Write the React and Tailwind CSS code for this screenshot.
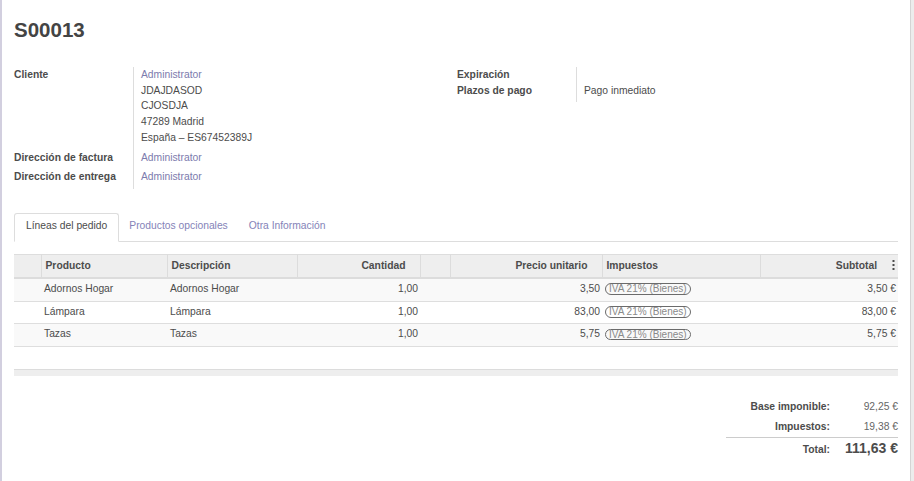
const LINES = [
  { product: 'Adornos Hogar', desc: 'Adornos Hogar', qty: '1,00', price: '3,50', subtotal: '3,50 €' },
  { product: 'Lámpara', desc: 'Lámpara', qty: '1,00', price: '83,00', subtotal: '83,00 €' },
  { product: 'Tazas', desc: 'Tazas', qty: '1,00', price: '5,75', subtotal: '5,75 €' },
]

function Field({ label, children, last }) {
  return (
    <div className="flex">
      <div className={`w-[119px] shrink-0 font-bold ${last ? '' : 'pb-[4px]'}`}>{label}</div>
      <div className={`flex-1 border-l border-[#ddd] pl-[7px] ${last ? '' : 'pb-[4px]'}`}>{children}</div>
    </div>
  )
}

function TaxBadge() {
  return (
    <span className="inline-block rounded-full border-[1.5px] border-[#6b6b6b] px-[3px] text-[10px] leading-[9.5px] text-[#8a8a8a] align-middle">
      IVA 21% (Bienes)
    </span>
  )
}

export default function App() {
  return (
    <div className="flex min-h-[481px] bg-[#ececec] font-['Liberation_Sans',Arial,sans-serif] text-[10.3px] leading-[15.7px] text-[#4c4c4c]">
      <div className="w-[911px] shrink-0 bg-white border-l-2 border-[#d2cfdf] border-r border-r-[#d4d4d4] px-[12px] pt-[18px]">
        {/* Titulo */}
        <h1 className="text-[20.5px] leading-[24px] font-bold text-[#444]">S00013</h1>

        {/* Campos */}
        <div className="mt-[25px] grid grid-cols-2">
          <div>
            <Field label="Cliente">
              <div className="text-[#7c7bad]">Administrator</div>
              <div>JDAJDASOD</div>
              <div>CJOSDJA</div>
              <div>47289 Madrid</div>
              <div>España – ES67452389J</div>
            </Field>
            <Field label="Dirección de factura">
              <div className="text-[#7c7bad]">Administrator</div>
            </Field>
            <Field label="Dirección de entrega">
              <div className="text-[#7c7bad]">Administrator</div>
            </Field>
          </div>
          <div className="pl-px">
            <Field label="Expiración" last>
              <div>&nbsp;</div>
            </Field>
            <Field label="Plazos de pago">
              <div>Pago inmediato</div>
            </Field>
          </div>
        </div>

        {/* Pestañas */}
        <div className="mt-[24px] flex border-b border-[#ddd]">
          <div className="-mb-px rounded-t-[3px] border border-[#ddd] border-b-white bg-white px-[11px] pt-[4px] pb-[7px]">
            Líneas del pedido
          </div>
          <div className="pl-[10px] pr-[11px] pt-[5px] pb-[6px] text-[#8583b8]">Productos opcionales</div>
          <div className="px-[10px] pt-[5px] pb-[6px] text-[#8583b8]">Otra Información</div>
        </div>

        {/* Lineas */}
        <table className="mt-[12px] w-full table-fixed border-collapse">
          <colgroup>
            <col className="w-[27px]" />
            <col className="w-[126px]" />
            <col className="w-[130px]" />
            <col className="w-[123px]" />
            <col className="w-[30px]" />
            <col className="w-[152px]" />
            <col className="w-[158px]" />
            <col className="w-[138px]" />
          </colgroup>
          <thead>
            <tr className="bg-[#eeeeee] border-t border-[#ddd] border-b-2 border-b-[#dcdcdc] font-bold">
              <th className="pt-[3px] pb-[3.5px]"></th>
              <th className="border-l border-[#dcdcdc] pl-[4px] pt-[3px] pb-[3.5px] text-left">Producto</th>
              <th className="border-l border-[#dcdcdc] pl-[4px] pt-[3px] pb-[3.5px] text-left">Descripción</th>
              <th className="border-l border-[#dcdcdc] pr-[14px] pt-[3px] pb-[3.5px] text-right">Cantidad</th>
              <th className="border-l border-[#dcdcdc] pt-[3px] pb-[3.5px]"></th>
              <th className="border-l border-[#dcdcdc] pr-[14px] pt-[3px] pb-[3.5px] text-right">Precio unitario</th>
              <th className="border-l border-[#dcdcdc] pl-[4px] pt-[3px] pb-[3.5px] text-left">Impuestos</th>
              <th className="border-l border-[#dcdcdc] pr-[3px] pt-[3px] pb-[3.5px] text-right">
                <span className="inline-flex items-center gap-[15px]">
                  Subtotal
                  <svg width="3" height="10" viewBox="0 0 3 10" className="fill-[#4c4c4c]">
                    <rect x="0.5" y="0" width="2" height="2" />
                    <rect x="0.5" y="4" width="2" height="2" />
                    <rect x="0.5" y="8" width="2" height="2" />
                  </svg>
                </span>
              </th>
            </tr>
          </thead>
          <tbody>
            {LINES.map((l, i) => (
              <tr key={l.product} className={`border-b border-[#dedede] ${i % 2 === 0 ? 'bg-[#f9f9f9]' : 'bg-white'}`}>
                <td className="pt-[2px] pb-[4px]"></td>
                <td className="pl-[3px] pt-[2px] pb-[4px]">{l.product}</td>
                <td className="pl-[3px] pt-[2px] pb-[4px]">{l.desc}</td>
                <td className="pr-[2px] pt-[2px] pb-[4px] text-right">{l.qty}</td>
                <td className="pt-[2px] pb-[4px]"></td>
                <td className="pr-[2px] pt-[2px] pb-[4px] text-right">{l.price}</td>
                <td className="pl-[3px] pt-[2px] pb-[4px]"><TaxBadge /></td>
                <td className="pr-[2px] pt-[2px] pb-[4px] text-right">{l.subtotal}</td>
              </tr>
            ))}
          </tbody>
        </table>

        <div className="mt-[22px] h-[7px] border-t border-[#dcdcdc] bg-[#eeeeee]"></div>

        {/* Totales */}
        <div className="ml-auto mt-[21px] w-[172px]">
          <div className="flex justify-end leading-[20px]">
            <span className="font-bold">Base imponible:</span>
            <span className="w-[68px] text-right text-[#666]">92,25 €</span>
          </div>
          <div className="flex justify-end leading-[19px]">
            <span className="font-bold">Impuestos:</span>
            <span className="w-[68px] text-right text-[#666]">19,38 €</span>
          </div>
          <div className="mt-[1px] flex items-baseline justify-end border-t border-[#ccc] leading-[20px]">
            <span className="font-bold">Total:</span>
            <span className="w-[68px] text-right text-[14px] font-bold">111,63 €</span>
          </div>
        </div>
      </div>
    </div>
  )
}
